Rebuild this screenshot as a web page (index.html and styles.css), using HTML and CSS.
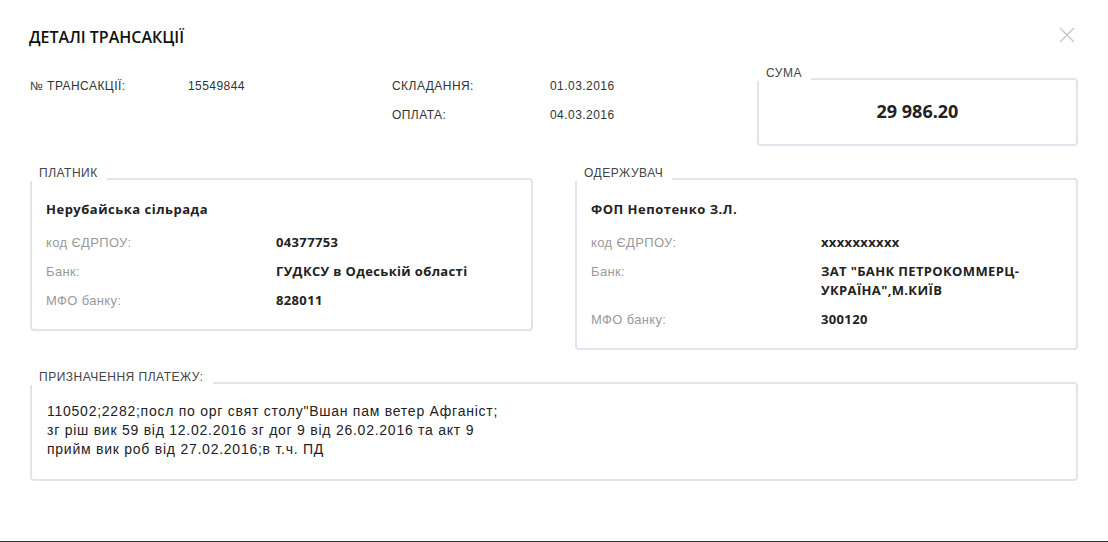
FILE: index.html
```
<!DOCTYPE html>
<html lang="uk">

<head>
  <meta charset="utf-8">
  <meta name="viewport" content="width=device-width, initial-scale=1.0">
  <title>Деталі трансакції</title>
  <link rel="stylesheet" href="styles.css">
</head>

<body>
  <div class="modal">
    <div class="modal-head">
      <h2 class="title">ДЕТАЛІ ТРАНСАКЦІЇ</h2>
      <span class="close">
        <svg width="16" height="16" viewBox="0 0 16 16">
          <path d="M1 1L15 15M15 1L1 15" stroke="#c4c4c4" stroke-width="1.3" fill="none" />
        </svg>
      </span>
    </div>

    <div class="info">
      <div class="info-col">
        <div class="info-row">
          <span class="info-label">№ ТРАНСАКЦІЇ:</span>
          <span class="info-value">15549844</span>
        </div>
      </div>
      <div class="info-col">
        <div class="info-row">
          <span class="info-label">СКЛАДАННЯ:</span>
          <span class="info-value">01.03.2016</span>
        </div>
        <div class="info-row">
          <span class="info-label">ОПЛАТА:</span>
          <span class="info-value">04.03.2016</span>
        </div>
      </div>
      <div class="box sum">
        <span class="box-label">СУМА</span>
        <div class="sum-value">29 986.20</div>
      </div>
    </div>

    <div class="parties">
      <div class="box party">
        <span class="box-label">ПЛАТНИК</span>
        <div class="party-name">Нерубайська сільрада</div>
        <div class="party-row">
          <span class="party-label">код ЄДРПОУ:</span>
          <span class="party-value">04377753</span>
        </div>
        <div class="party-row">
          <span class="party-label">Банк:</span>
          <span class="party-value">ГУДКСУ в Одеській області</span>
        </div>
        <div class="party-row">
          <span class="party-label">МФО банку:</span>
          <span class="party-value">828011</span>
        </div>
      </div>

      <div class="box party">
        <span class="box-label">ОДЕРЖУВАЧ</span>
        <div class="party-name">ФОП Непотенко З.Л.</div>
        <div class="party-row">
          <span class="party-label">код ЄДРПОУ:</span>
          <span class="party-value">xxxxxxxxxx</span>
        </div>
        <div class="party-row">
          <span class="party-label">Банк:</span>
          <span class="party-value">ЗАТ "БАНК ПЕТРОКОММЕРЦ-УКРАЇНА",М.КИЇВ</span>
        </div>
        <div class="party-row">
          <span class="party-label">МФО банку:</span>
          <span class="party-value">300120</span>
        </div>
      </div>
    </div>

    <div class="box purpose">
      <span class="box-label">ПРИЗНАЧЕННЯ ПЛАТЕЖУ:</span>
      <div class="purpose-text">110502;2282;посл по орг свят столу"Вшан пам ветер Афганіст;<br>зг ріш вик 59 від 12.02.2016 зг дог 9 від 26.02.2016 та акт 9<br>прийм вик роб від 27.02.2016;в т.ч. ПД</div>
    </div>
  </div>
</body>

</html>
```

FILE: styles.css
```
html,
body {
  margin: 0;
  background: #fff;
}

.modal {
  box-sizing: border-box;
  height: 542px;
  padding: 27px 30px 0 30px;
  border-bottom: 1px solid #333;
  font-family: "Liberation Sans", Arial, sans-serif;
  color: #333;
}

.modal-head {
  display: flex;
  justify-content: space-between;
  align-items: center;
  height: 20px;
}

.title {
  margin: 0 0 0 -1px;
  font-family: "Open Sans", sans-serif;
  font-size: 16px;
  font-weight: 600;
  line-height: 20px;
  color: #111;
}

.close {
  display: flex;
  margin: -4px 3px 0 0;
}

.info {
  display: grid;
  grid-template-columns: 362px 365px 321px;
  margin-top: 31px;
}

.info-row {
  display: flex;
  font-size: 12px;
  line-height: 16px;
  letter-spacing: 0.45px;
  margin-bottom: 13px;
}

.info-label {
  width: 158px;
  flex-shrink: 0;
  color: #333;
}

.info-value {
  color: #333;
}

.box {
  position: relative;
  border: 2px solid #dfe4ee;
  border-radius: 4px;
}

.box-label {
  position: absolute;
  top: -14px;
  left: -2px;
  padding: 0 9px 0 9px;
  background: #fff;
  font-size: 12px;
  line-height: 15px;
  letter-spacing: 0.5px;
  color: #444;
}

.sum {
  padding: 20px 0 21px;
  text-align: center;
}

.sum-value {
  font-family: "Open Sans", sans-serif;
  font-size: 18px;
  font-weight: 700;
  line-height: 23px;
  color: #222;
}

.parties {
  display: grid;
  grid-template-columns: 503px 503px;
  column-gap: 42px;
  align-items: start;
  margin-top: 32px;
}

.party {
  padding: 20px 14px 19px 14px;
}

.party-name {
  font-family: "Open Sans", sans-serif;
  font-size: 13px;
  font-weight: 700;
  line-height: 19px;
  letter-spacing: 0.5px;
  color: #222;
  margin-bottom: 14px;
}

.party-row {
  display: grid;
  grid-template-columns: 230px 1fr;
  margin-bottom: 10px;
}

.party-row:last-child {
  margin-bottom: 0;
}

.party-label {
  font-size: 13px;
  line-height: 19px;
  letter-spacing: 0.35px;
  color: #999;
}

.party-value {
  font-family: "Open Sans", sans-serif;
  font-size: 13px;
  font-weight: 700;
  line-height: 19px;
  letter-spacing: 0.35px;
  color: #222;
  padding-right: 40px;
}

.purpose {
  margin-top: 32px;
  padding: 18px 15px 20px 15px;
}

.purpose-text {
  font-size: 14px;
  line-height: 19px;
  letter-spacing: 0.75px;
  color: #222;
}
```
